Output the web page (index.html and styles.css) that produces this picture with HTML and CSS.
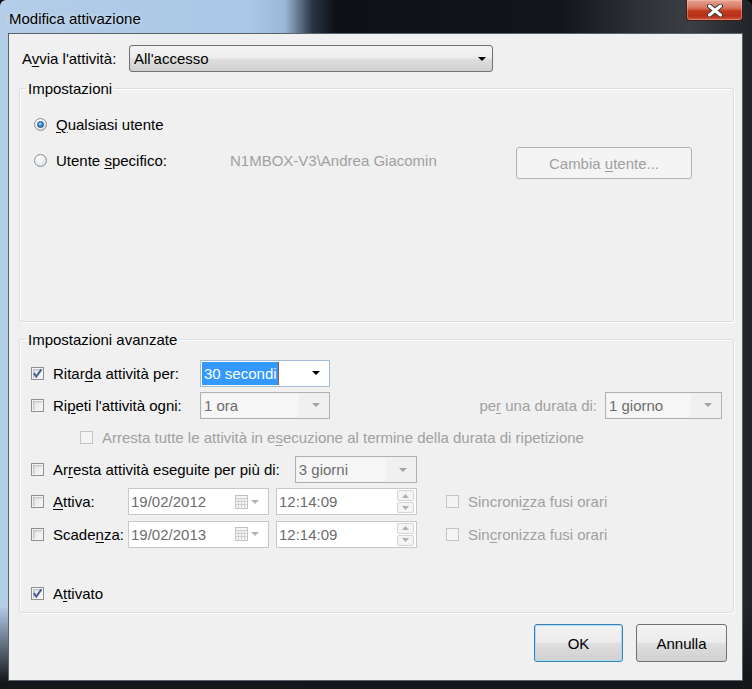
FILE: index.html
```html
<!DOCTYPE html>
<html lang="it">
<head>
<meta charset="utf-8">
<title>Modifica attivazione</title>
<link rel="stylesheet" href="styles.css">
</head>
<body>
<div class="window">
  <div class="titlebar">
    <span class="title">Modifica attivazione</span>
    <div class="close-btn">
      <svg width="18" height="13" viewBox="0 0 18 13"><path d="M3.5 2 L14.5 11 M14.5 2 L3.5 11" stroke="#3a3a3a" stroke-width="5" stroke-linecap="round"/><path d="M3.5 2 L14.5 11 M14.5 2 L3.5 11" stroke="#ffffff" stroke-width="3" stroke-linecap="round"/></svg>
    </div>
  </div>
  <div class="client">
    <div class="start-row">
      <span class="start-label">A<u>v</u>via l'attività:</span>
      <div class="dropdown"><span class="dd-text">All'accesso</span><span class="arrow"></span></div>
    </div>

    <fieldset class="group group-main">
      <legend>Impostazioni</legend>
      <div class="group-body main-body">
        <div class="user-row">
          <span class="radio checked"></span><span class="opt-label"><u>Q</u>ualsiasi utente</span>
        </div>
        <div class="user-row">
          <span class="radio"></span><span class="opt-label user-label">Utente <u>s</u>pecifico:</span>
          <span class="disabled-text user-name">N1MBOX-V3\Andrea Giacomin</span>
          <div class="btn btn-disabled change-user"><span>Cambia <u>u</u>tente...</span></div>
        </div>
      </div>
    </fieldset>

    <fieldset class="group group-adv">
      <legend>Impostazioni avanzate</legend>
      <div class="group-body adv-body">
        <div class="adv-row">
          <span class="cb"><svg width="11" height="11" viewBox="0 0 11 11"><path d="M1.8 5.2 L4.3 8.6 L9.4 1.4" fill="none" stroke="#4a5d8e" stroke-width="2"/></svg></span>
          <span class="cb-label w-combo-label">Ritar<u>d</u>a attività per:</span>
          <div class="combo combo-edit w-130"><span class="sel">30 secondi</span><span class="arrow"></span></div>
        </div>
        <div class="adv-row">
          <span class="cb"></span>
          <span class="cb-label w-combo-label">Ri<u>p</u>eti l'attività ogni:</span>
          <div class="combo combo-disabled w-130"><span class="combo-text">1 ora</span><span class="arrow arrow-gray"></span></div>
          <span class="disabled-text dur-label">pe<u>r</u> una durata di:</span>
          <div class="combo combo-disabled w-117"><span class="combo-text">1 giorno</span><span class="arrow arrow-gray"></span></div>
        </div>
        <div class="adv-row sub-row">
          <span class="cb cb-disabled"></span>
          <span class="cb-label disabled-text">Arresta tutte le attività in e<u>s</u>ecuzione al termine della durata di ripetizione</span>
        </div>
        <div class="adv-row">
          <span class="cb"></span>
          <span class="cb-label">Ar<u>r</u>esta attività eseguite per più di:</span>
          <div class="combo combo-disabled w-122 stop-combo"><span class="combo-text">3 giorni</span><span class="arrow arrow-gray"></span></div>
        </div>
        <div class="adv-row">
          <span class="cb"></span>
          <span class="cb-label w-date-label"><u>A</u>ttiva:</span>
          <div class="picker date-picker"><span class="picker-text">19/02/2012</span>
            <svg class="cal" width="26" height="14" viewBox="0 0 26 14"><rect x="0.5" y="0.5" width="12" height="13" fill="#f6f6f6" stroke="#c2c2c2"/><path d="M0.5 3.5 H12.5 M0.5 6.5 H12.5 M0.5 9.5 H12.5 M3.5 3.5 V13.5 M6.5 3.5 V13.5 M9.5 3.5 V13.5" stroke="#d0d0d0"/><path d="M16 5 L24 5 L20 9 Z" fill="#b4b4b4"/></svg>
          </div>
          <div class="picker time-picker"><span class="picker-text">12:14:09</span>
            <div class="spin"><span class="spin-btn"><svg width="7" height="4" viewBox="0 0 7 4"><path d="M0 4 L3.5 0 L7 4 Z" fill="#b0b0b0"/></svg></span><span class="spin-btn"><svg width="7" height="4" viewBox="0 0 7 4"><path d="M0 0 L3.5 4 L7 0 Z" fill="#b0b0b0"/></svg></span></div>
          </div>
          <span class="cb cb-disabled sync-cb"></span>
          <span class="cb-label disabled-text">Sincroni<u>z</u>za fusi orari</span>
        </div>
        <div class="adv-row">
          <span class="cb"></span>
          <span class="cb-label w-date-label">Scade<u>n</u>za:</span>
          <div class="picker date-picker"><span class="picker-text">19/02/2013</span>
            <svg class="cal" width="26" height="14" viewBox="0 0 26 14"><rect x="0.5" y="0.5" width="12" height="13" fill="#f6f6f6" stroke="#c2c2c2"/><path d="M0.5 3.5 H12.5 M0.5 6.5 H12.5 M0.5 9.5 H12.5 M3.5 3.5 V13.5 M6.5 3.5 V13.5 M9.5 3.5 V13.5" stroke="#d0d0d0"/><path d="M16 5 L24 5 L20 9 Z" fill="#b4b4b4"/></svg>
          </div>
          <div class="picker time-picker"><span class="picker-text">12:14:09</span>
            <div class="spin"><span class="spin-btn"><svg width="7" height="4" viewBox="0 0 7 4"><path d="M0 4 L3.5 0 L7 4 Z" fill="#b0b0b0"/></svg></span><span class="spin-btn"><svg width="7" height="4" viewBox="0 0 7 4"><path d="M0 0 L3.5 4 L7 0 Z" fill="#b0b0b0"/></svg></span></div>
          </div>
          <span class="cb cb-disabled sync-cb"></span>
          <span class="cb-label disabled-text">Sin<u>c</u>ronizza fusi orari</span>
        </div>
        <div class="adv-row enabled-row">
          <span class="cb"><svg width="11" height="11" viewBox="0 0 11 11"><path d="M1.8 5.2 L4.3 8.6 L9.4 1.4" fill="none" stroke="#4a5d8e" stroke-width="2"/></svg></span>
          <span class="cb-label">A<u>t</u>tivato</span>
        </div>
      </div>
    </fieldset>

    <div class="button-row">
      <div class="btn btn-default">OK</div>
      <div class="btn">Annulla</div>
    </div>
  </div>
</div>
</body>
</html>
```
FILE: styles.css
```css
html, body {
  margin: 0;
  padding: 0;
  background: #000;
  overflow: hidden;
}

body {
  font-family: "Liberation Sans", Arial, sans-serif;
  font-size: 15px;
  line-height: 17px;
  color: #000;
}

u {
  text-decoration: underline;
  text-underline-offset: 2px;
}

.window {
  width: 752px;
  height: 689px;
  display: flex;
  flex-direction: column;
  box-sizing: border-box;
  border-radius: 6px 6px 0 0;
  background:
    linear-gradient(to bottom, rgba(20, 22, 26, 0) 0, rgba(20, 22, 26, 0) 88%, rgba(20, 22, 26, 1) 99%),
    linear-gradient(to right, #b4cde8 0, #a9c7e7 250px, #9ab7d6 285px, #2a3646 312px, #0d1117 335px, #12151a 560px, #2e3237 640px, #3b3f44 690px, #202328 752px);
}

.titlebar {
  height: 33px;
  display: flex;
  align-items: flex-start;
  flex-shrink: 0;
}

.title {
  margin: 10px 0 0 9px;
  color: #000;
  text-shadow: 0 0 6px rgba(255, 255, 255, 0.6);
}

.close-btn {
  margin-left: auto;
  margin-right: 9px;
  width: 57px;
  height: 21px;
  box-sizing: border-box;
  border: 1px solid #3c1e18;
  border-top: none;
  border-radius: 0 0 4px 4px;
  background: linear-gradient(to bottom, #e7a495 0%, #d7735d 40%, #c1381c 55%, #b6301a 80%, #d2563a 100%);
  box-shadow: inset 0 0 0 1px rgba(255, 220, 200, 0.35);
  display: flex;
  align-items: center;
  justify-content: center;
}

.client {
  margin: 0 9px 0 8px;
  height: 648px;
  box-sizing: border-box;
  border: 1px solid #58616c;
  background: #f0f0f0;
  display: flex;
  flex-direction: column;
}

/* top row */
.start-row {
  display: flex;
  align-items: center;
  margin-top: 11px;
  padding-left: 13px;
}

.start-label {
  width: 107px;
}

.dropdown {
  width: 364px;
  height: 27px;
  box-sizing: border-box;
  border: 1px solid #707070;
  border-radius: 3px;
  background: linear-gradient(to bottom, #f3f3f3 0%, #ececec 48%, #dedede 52%, #d0d0d0 100%);
  display: flex;
  align-items: center;
  padding: 0 6px 0 4px;
}

.dd-text {
  flex: 1;
}

.arrow {
  width: 0;
  height: 0;
  border-left: 4px solid transparent;
  border-right: 4px solid transparent;
  border-top: 4px solid #000;
}

.arrow-gray {
  border-top-color: #a2a2a2;
}

/* group boxes */
.group {
  margin: 0 8px 0 10px;
  padding: 0;
  border: 1px solid #d5dfe5;
  border-radius: 3px;
  box-shadow: inset 1px 1px 0 #fff, 1px 1px 0 #fff;
  box-sizing: border-box;
  min-width: 0;
}

.group legend {
  margin-left: 6px;
  padding: 0 2px;
  line-height: 17px;
}

.group-main {
  margin-top: 8px;
  height: 242px;
}

.group-adv {
  margin-top: 9px;
  height: 282px;
}

.main-body {
  padding: 9px 14px 0 14px;
}

.user-row {
  height: 36px;
  display: flex;
  align-items: center;
}

.radio {
  position: relative;
  width: 13px;
  height: 13px;
  box-sizing: border-box;
  border-radius: 50%;
  border: 1px solid #8a8f94;
  background: radial-gradient(circle at 35% 35%, #ffffff 0%, #eef0f2 45%, #c9cdd2 100%);
  flex-shrink: 0;
}

.radio.checked::after {
  content: "";
  position: absolute;
  left: 2px;
  top: 2px;
  width: 7px;
  height: 7px;
  box-sizing: border-box;
  border-radius: 50%;
  border: 1px solid #1c4a80;
  background: radial-gradient(circle at 40% 35%, #a6e3ff 0%, #3c9ae0 45%, #0d4d92 100%);
}

.opt-label {
  margin-left: 9px;
}

.user-label {
  width: 174px;
}

.disabled-text {
  color: #a0a0a0;
}

.user-name {
  width: 286px;
}

.btn {
  height: 38px;
  box-sizing: border-box;
  border: 1px solid #707070;
  border-radius: 3px;
  background: linear-gradient(to bottom, #f3f3f3 0%, #ececec 48%, #dedede 52%, #d0d0d0 100%);
  display: flex;
  align-items: center;
  justify-content: center;
}

.btn-disabled {
  background: #f4f4f4;
  border-color: #adb2b5;
  color: #a0a0a0;
}

.change-user {
  width: 176px;
  height: 32px;
  margin-top: 6px;
}

/* advanced group */
.adv-body {
  padding: 9px 11px 0 11px;
}

.adv-row {
  height: 32.2px;
  display: flex;
  align-items: center;
}

.sub-row {
  padding-left: 49px;
}

.enabled-row {
  margin-top: 27px;
}

.cb {
  width: 13px;
  height: 13px;
  box-sizing: border-box;
  border: 1px solid #8e8f8f;
  background: linear-gradient(135deg, #e3e5e8 0%, #f8f8f8 100%);
  box-shadow: inset 0 0 0 1px #f4f4f4, inset 2px 2px 2px #b5b9bf;
  display: flex;
  align-items: center;
  justify-content: center;
  flex-shrink: 0;
}

.cb svg {
  display: block;
}

.cb-disabled {
  border-color: #c5c5c5;
  background: #f4f4f4;
  box-shadow: none;
}

.cb-label {
  margin-left: 9px;
  white-space: nowrap;
}

.w-combo-label {
  width: 147px;
  flex-shrink: 0;
}

.w-date-label {
  width: 75px;
  flex-shrink: 0;
}

.combo {
  height: 27px;
  box-sizing: border-box;
  display: flex;
  align-items: center;
  padding: 0 9px 0 1px;
  flex-shrink: 0;
}

.w-130 { width: 130px; }
.w-117 { width: 117px; }
.w-122 { width: 122px; }

.combo-edit {
  border: 1px solid #a5bcd6;
  background: #fff;
  justify-content: space-between;
}

.sel {
  background: #3399ff;
  color: #fff;
  height: 23px;
  line-height: 23px;
  padding: 0 1px 0 2px;
  border-right: 1px solid #a05a20;
}

.combo-disabled {
  border: 1px solid #adb2b5;
  background: #f0f0f0;
  color: #6d6d6d;
}

.combo-text {
  height: 23px;
  line-height: 23px;
  flex: 1;
  background: #f6f6f6;
  padding-left: 2px;
  margin-right: 13px;
}

.dur-label {
  margin-left: auto;
  margin-right: 8px;
}

.stop-combo {
  margin-left: 15px;
}

.picker {
  height: 27px;
  width: 141px;
  box-sizing: border-box;
  border: 1px solid #c6c8cc;
  background: #fff;
  display: flex;
  align-items: center;
  padding: 0 3px 0 2px;
  color: #6d6d6d;
  flex-shrink: 0;
}

.picker-text {
  flex: 1;
}

.cal {
  display: block;
  margin-right: 4px;
}

.time-picker {
  margin-left: 7px;
  padding-right: 2px;
}

.spin {
  display: flex;
  flex-direction: column;
  gap: 1px;
}

.spin-btn {
  width: 17px;
  height: 11px;
  box-sizing: border-box;
  border: 1px solid #d2d4d8;
  border-radius: 2px;
  background: #f4f4f4;
  display: flex;
  align-items: center;
  justify-content: center;
}

.spin-btn svg {
  display: block;
}

.sync-cb {
  margin-left: 29px;
}

/* buttons */
.button-row {
  display: flex;
  justify-content: flex-end;
  gap: 13px;
  margin-top: 11px;
  padding-right: 15px;
}

.button-row .btn {
  width: 91px;
}

.btn-default {
  width: 89px !important;
  border-color: #3c7fb1;
  box-shadow: inset 0 0 0 1px #a9dcf7;
}
```
